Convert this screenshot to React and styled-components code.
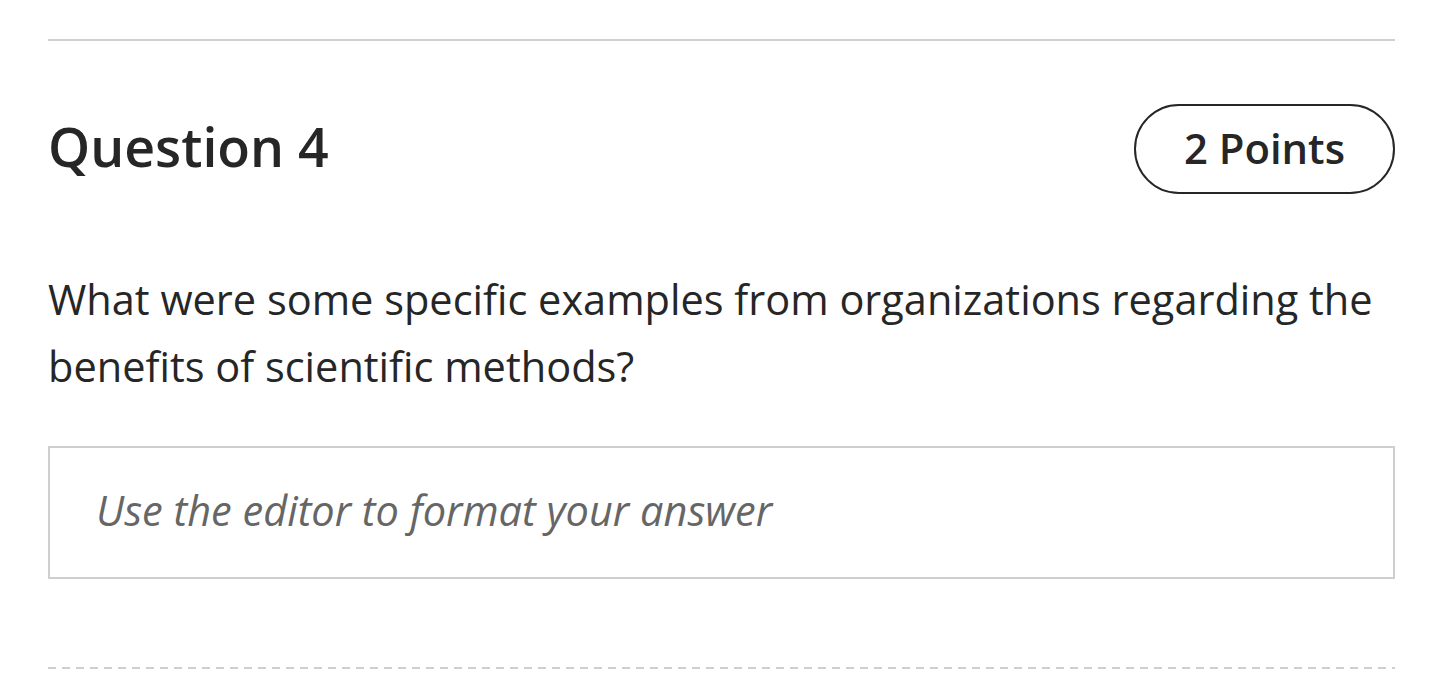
import React from 'react';
import styled, { createGlobalStyle } from 'styled-components';

const GlobalStyle = createGlobalStyle`
  body {
    margin: 0;
    background: #fff;
    font-family: "Open Sans", "Noto Sans", sans-serif;
    color: #262626;
  }
`;

const Page = styled.div`
  padding: 39px 45px 0 48px;
`;

const Card = styled.section`
  border-top: 2px solid #d0d0d0;
`;

const Header = styled.div`
  display: flex;
  justify-content: space-between;
  align-items: center;
  margin-top: 63px;
`;

const Title = styled.h2`
  margin: 0;
  padding-bottom: 5px;
  font-size: 53.6px;
  font-weight: 600;
  line-height: 1;
  color: #262626;
`;

const Points = styled.div`
  box-sizing: border-box;
  height: 90px;
  padding: 0 48px 4px;
  display: flex;
  align-items: center;
  border: 2px solid #262626;
  border-radius: 45px;
  font-size: 41.8px;
  font-weight: 600;
`;

const Prompt = styled.p`
  margin: 72px 0 0;
  font-size: 41.5px;
  line-height: 67px;
`;

const Answer = styled.div`
  box-sizing: border-box;
  margin-top: 46px;
  height: 133px;
  padding: 0 46px 6px;
  display: flex;
  align-items: center;
  border: 2px solid #cfcfcf;
  font-size: 41.5px;
  font-style: italic;
  color: #666;
`;

const Divider = styled.hr`
  margin: 88px 0 0;
  border: 0;
  height: 2px;
  background: repeating-linear-gradient(to right, #cfcfcf 0 8px, transparent 8px 14px);
`;

export default function App() {
  return (
    <>
      <GlobalStyle />
      <Page>
        <Card>
          <Header>
            <Title>Question 4</Title>
            <Points>2 Points</Points>
          </Header>
          <Prompt>
            What were some specific examples from organizations regarding the benefits of scientific methods?
          </Prompt>
          <Answer>Use the editor to format your answer</Answer>
          <Divider />
        </Card>
      </Page>
    </>
  );
}
